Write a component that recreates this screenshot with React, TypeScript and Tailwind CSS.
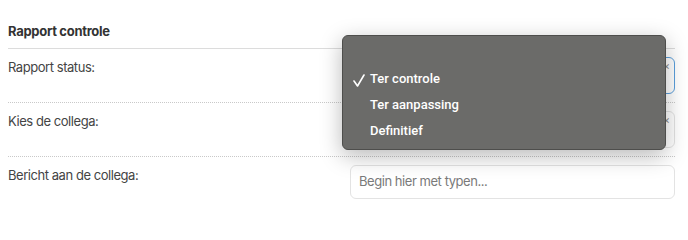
import React from "react";

const font = { fontFamily: "Inter, 'Noto Sans', sans-serif" };

type Row = { label: string; field: "select-focus" | "select" | "input" };

const rows: Row[] = [
  { label: "Rapport status:", field: "select-focus" },
  { label: "Kies de collega:", field: "select" },
  { label: "Bericht aan de collega:", field: "input" },
];

const options = ["Ter controle", "Ter aanpassing", "Definitief"];

function Field({ kind }: { kind: Row["field"] }) {
  if (kind === "input") {
    return (
      <div className="flex h-[34px] items-center rounded-md border border-[#e3e3e3] bg-white px-2 text-[13px] tracking-[-0.45px] text-[#7a7a7a]">
        Begin hier met typen...
      </div>
    );
  }
  const focus = kind === "select-focus";
  return (
    <div className={`relative h-[37px] rounded-md border bg-white ${focus ? "border-[#5a9fdc]" : "border-[#e3e3e3]"}`}>
      <span className="absolute right-[4px] top-[1px] text-[11px] leading-[14px] text-[#8a8a8a]">×</span>
    </div>
  );
}

export default function App() {
  return (
    <div className="relative h-[225px] w-[688px] bg-white" style={font}>
      <div className="pl-2 pr-[13px]">
        <h2 className="pt-[22px] pb-2 text-[13px] leading-[18px] font-bold tracking-[-0.3px] text-[#333]">Rapport controle</h2>
        <div className="h-px bg-[#dcdcdc]" />
        {rows.map((row, i) => (
          <div
            key={row.label}
            className={`grid grid-cols-[342px_1fr] pt-2 pb-2 ${i < rows.length - 1 ? "border-b border-dotted border-[#c9c9c9]" : ""}`}
          >
            <div className="pt-px text-[13px] leading-[18px] tracking-[-0.45px] text-[#444]">{row.label}</div>
            <Field kind={row.field} />
          </div>
        ))}
      </div>

      <div
        className="absolute left-[342px] top-[35px] h-[115px] w-[324px] rounded-[6px] border border-[#4e4e4c] bg-[#6b6b69] pt-[30px] shadow-[0_6px_22px_rgba(0,0,0,0.28)]"
        style={{ fontFamily: "Roboto, 'Liberation Sans', Arial, sans-serif" }}
      >
        {options.map((opt, i) => (
          <div key={opt} className="relative flex h-[26px] items-center pl-[27px] text-[13px] font-medium text-white">
            {i === 0 && (
              <svg className="absolute left-[10px] top-[8px]" width="12" height="13" viewBox="0 0 12 13" fill="none">
                <path d="M1 7 L4.5 12 L11 1" stroke="white" strokeWidth="1.6" strokeLinecap="round" strokeLinejoin="round" />
              </svg>
            )}
            {opt}
          </div>
        ))}
      </div>
    </div>
  );
}
